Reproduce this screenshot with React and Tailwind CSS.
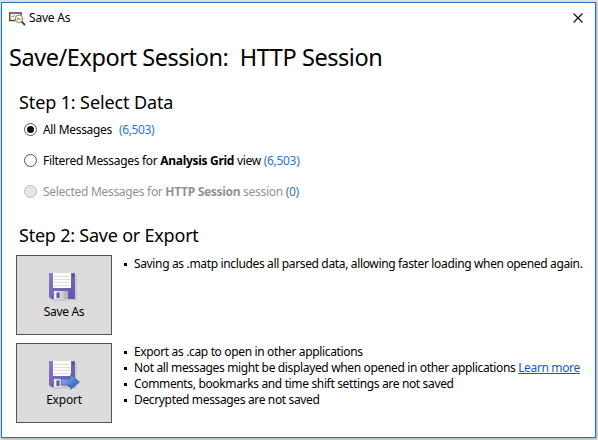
import { useId } from "react";

function SessionIcon() {
  return (
    <svg width="17" height="14" viewBox="0 0 17 14" fill="none" className="mt-px shrink-0">
      <path d="M6.500 8.500H.7V1h11.600v2" stroke="#3f4750" strokeWidth="1.3" />
      <path d="M2 5l1.500-.8 1.200.6 1.300-2" stroke="#e8a33c" strokeWidth="1.1" />
      <circle cx="10" cy="6.800" r="3.700" fill="#fff" stroke="#858d95" strokeWidth="1.1" />
      <path d="M7.700 8l1.500-2 1.300 1.200 1.700.3" stroke="#f0922b" strokeWidth="1.400" />
      <path d="M12.700 9.600l3.300 3.500" stroke="#333b45" strokeWidth="1.8" />
    </svg>
  );
}

function Floppy({ arrow }) {
  const id = useId().replace(/[^a-zA-Z0-9]/g, "");
  return (
    <svg width="34" height="30" viewBox="0 0 34 30" className="shrink-0">
      <defs>
        <linearGradient id={id + "body"} x1="0" y1="0" x2="1" y2="1">
          <stop offset="0" stopColor="#8b7cc5" />
          <stop offset="1" stopColor="#6551a6" />
        </linearGradient>
        <linearGradient id={id + "metal"} x1="0" y1="0" x2="1" y2="0">
          <stop offset="0" stopColor="#f5f5f5" />
          <stop offset="1" stopColor="#b4b4b9" />
        </linearGradient>
        <linearGradient id={id + "arrow"} x1="0" y1="0" x2="1" y2="1">
          <stop offset="0" stopColor="#8db9f4" />
          <stop offset="1" stopColor="#2453b2" />
        </linearGradient>
      </defs>
      <path d="M5 28h24V3" stroke="#c5c5c8" strokeWidth="1.5" fill="none" />
      <path d="M2 1h26v26H4l-2-2z" fill={"url(#" + id + "body)"} />
      <path d="M6 1h18v15H6z" fill="#fcfcfc" />
      <path d="M7 4.500h16M7 7.500h16M7 10.500h16M7 13.500h16" stroke="#dedede" strokeWidth="1" />
      <path d="M25.500 2.500h1.500v2h-1.500z" fill="#3e316f" />
      <path d="M7 19h14v8H7z" fill={"url(#" + id + "metal)"} />
      <path d="M9.500 20.500h3V26h-3z" fill="#6354a0" />
      {!arrow && <path d="M18.500 19v8" stroke="#a6a6ad" />}
      {arrow && (
        <path d="M14.500 19h9v-4.500l9 7.500-9 7.500V25h-9z" fill={"url(#" + id + "arrow)"} stroke="#3767b8" strokeWidth=".7" />
      )}
    </svg>
  );
}

function Option({ state, children }) {
  const ring = state === "disabled" ? "border-[#bcbcbc] bg-[#e6e6e6]" : "border-[#555] bg-white";
  return (
    <div className={"flex h-[31px] items-center pl-[22px] text-[12px] whitespace-pre " + (state === "disabled" ? "text-[#929292]" : "text-black")}>
      <span className={"mr-[6px] flex size-[13px] shrink-0 items-center justify-center rounded-full border " + ring}>
        {state === "checked" && <span className="size-[7px] rounded-full bg-[#111]" />}
      </span>
      {children}
    </div>
  );
}

function ActionButton({ label, arrow, className }) {
  return (
    <button className="flex h-[80px] w-[96px] shrink-0 flex-col items-center border border-[#555] bg-[#dcdcdc] pt-[16px] text-[12px] leading-[16px]">
      <Floppy arrow={arrow} />
      <span className={"mt-[2px] " + className}>{label}</span>
    </button>
  );
}

function Bullet({ children }) {
  return (
    <li className="flex h-4 items-center text-[12px] leading-4 tracking-[-0.35px] whitespace-pre">
      <span className="mr-[7px] size-[3px] shrink-0 bg-black" />
      <span>{children}</span>
    </li>
  );
}

export default function App() {
  return (
    <div className="h-[440px] w-[598px] bg-[#dedede] pt-[2px] pl-px font-['Noto_Sans',sans-serif] text-black">
      <div className="flex h-[436px] w-[595px] flex-col border border-[#1878d0] bg-white shadow-[1px_1px_2px_#aaa]">
        <header className="flex h-[30px] items-center pl-[7px] text-[12px]">
          <SessionIcon />
          <span className="ml-[3px] tracking-[-0.2px]">Save As</span>
          <svg width="10" height="10" viewBox="0 0 10 10" className="mr-[12px] ml-auto">
            <path d="M.5.5l9 9M9.500.5l-9 9" stroke="#111" strokeWidth="1.200" />
          </svg>
        </header>
        <h1 className="mt-[4px] h-[40px] pl-[7px] text-[23.5px] leading-[40px] tracking-[-0.44px] whitespace-pre">Save/Export Session:  HTTP Session</h1>
        <h2 className="mt-[9px] h-[26px] pl-[17px] text-[18px] leading-[32px] tracking-[-0.12px]">Step 1: Select Data</h2>
        <div className="mt-[2px]">
          <Option state="checked">
            <span className="tracking-[-0.32px]">All Messages</span>
            <span className="ml-[7px] tracking-[-0.35px] text-[#2878c8]">(6,503)</span>
          </Option>
          <Option>
            <span className="tracking-[-0.3px]">Filtered Messages for <b>Analysis Grid</b> view <span className="text-[#2878c8]">(6,503)</span></span>
          </Option>
          <Option state="disabled">
            <span className="tracking-[-0.3px]">Selected Messages for <b>HTTP Session</b> session <span className="text-[#2878c8]">(0)</span></span>
          </Option>
        </div>
        <h2 className="mt-[12px] h-[34px] pl-[17px] text-[18px] leading-[32px] tracking-[-0.22px]">Step 2: Save or Export</h2>
        <section className="mt-[2px] flex pl-[14px]">
          <ActionButton label="Save As" className="tracking-[-0.3px]" />
          <ul className="mt-px ml-[12px]">
            <Bullet>Saving as .matp includes all parsed data, allowing faster loading when opened again.</Bullet>
          </ul>
        </section>
        <section className="mt-[8px] flex pl-[14px]">
          <ActionButton label="Export" arrow className="tracking-[-0.2px]" />
          <ul className="mt-px ml-[12px]">
            <Bullet>Export as .cap to open in other applications</Bullet>
            <Bullet>Not all messages might be displayed when opened in other applications <a className="text-[#1458c4] underline">Learn more</a></Bullet>
            <Bullet>Comments, bookmarks and time shift settings are not saved</Bullet>
            <Bullet>Decrypted messages are not saved</Bullet>
          </ul>
        </section>
      </div>
    </div>
  );
}
